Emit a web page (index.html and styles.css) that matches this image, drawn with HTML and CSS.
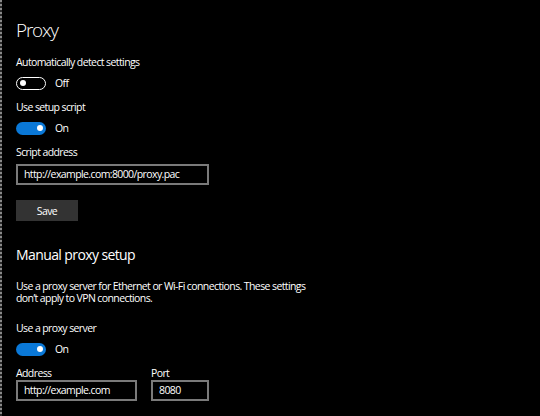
FILE: index.html
```html
<!DOCTYPE html>
<html lang="en">
<head>
<meta charset="utf-8">
<title>Proxy</title>
<link rel="stylesheet" href="styles.css">
</head>
<body>
<main class="page">
  <h1 class="title">Proxy</h1>

  <div class="label first">Automatically detect settings</div>
  <div class="toggle-row">
    <span class="toggle off"><span class="knob"></span></span>
    <span class="state">Off</span>
  </div>

  <div class="label">Use setup script</div>
  <div class="toggle-row">
    <span class="toggle on"><span class="knob"></span></span>
    <span class="state">On</span>
  </div>

  <div class="label field-label">Script address</div>
  <div class="input script-input">http://example.com:8000/proxy.pac</div>

  <button class="save">Save</button>

  <h2 class="subtitle">Manual proxy setup</h2>
  <p class="desc">Use a proxy server for Ethernet or Wi-Fi connections. These settings don’t apply to VPN connections.</p>

  <div class="label proxy-label">Use a proxy server</div>
  <div class="toggle-row">
    <span class="toggle on"><span class="knob"></span></span>
    <span class="state">On</span>
  </div>

  <div class="fields">
    <div class="field">
      <div class="field-label small">Address</div>
      <div class="input address-input">http://example.com</div>
    </div>
    <div class="field">
      <div class="field-label small">Port</div>
      <div class="input port-input">8080</div>
    </div>
  </div>
</main>
</body>
</html>
```

FILE: styles.css
```css
html, body {
  margin: 0;
  padding: 0;
}
body {
  width: 540px;
  height: 416px;
  overflow: hidden;
  background:
    repeating-linear-gradient(to bottom, #8a8a8a 0 2px, #2a2a2a 2px 4px) left top / 2px 100% no-repeat,
    #000;
  color: #fff;
  font-family: "Open Sans", "Noto Sans", sans-serif;
  font-size: 10.5px;
  letter-spacing: -0.6px;
}
.page {
  padding: 18px 0 0 16px;
}
.title {
  margin: 0;
  font-size: 19px;
  line-height: 24px;
  font-weight: 300;
  letter-spacing: -1.2px;
}
.label {
  line-height: 16px;
  margin-top: 9px;
}
.label.first {
  margin-top: 12px;
}
.toggle-row {
  display: flex;
  align-items: center;
  gap: 9px;
  height: 14px;
  margin-top: 6px;
}
.toggle {
  box-sizing: border-box;
  width: 30px;
  height: 13px;
  border-radius: 7px;
  display: flex;
  align-items: center;
  padding: 0 3px;
}
.toggle .knob {
  width: 6px;
  height: 6px;
  border-radius: 50%;
  background: #fff;
}
.toggle.off {
  border: 1.5px solid #fff;
  padding: 0 2.5px;
}
.toggle.on {
  background: #0a78d7;
  justify-content: flex-end;
}
.state {
  line-height: 14px;
}
.field-label {
  line-height: 14px;
}
.label.field-label {
  margin-top: 10px;
}
.input {
  box-sizing: border-box;
  height: 21px;
  border: 2px solid #7a7a7a;
  padding: 0 6px;
  line-height: 17px;
  white-space: nowrap;
  overflow: hidden;
}
.script-input {
  width: 193px;
  margin-top: 5px;
}
.save {
  display: block;
  width: 62px;
  height: 21px;
  margin-top: 15px;
  border: 0;
  padding: 0;
  background: #333;
  color: #fff;
  font: inherit;
  letter-spacing: inherit;
}
.subtitle {
  margin: 23px 0 0;
  font-size: 14px;
  line-height: 22px;
  font-weight: 400;
  letter-spacing: -0.6px;
}
.desc {
  margin: 14px 0 0;
  line-height: 12px;
  max-width: 300px;
}
.label.proxy-label {
  margin-top: 16px;
}
.fields {
  display: flex;
  gap: 14px;
  margin-top: 10px;
}
.address-input {
  width: 121px;
}
.port-input {
  width: 58px;
}
```
